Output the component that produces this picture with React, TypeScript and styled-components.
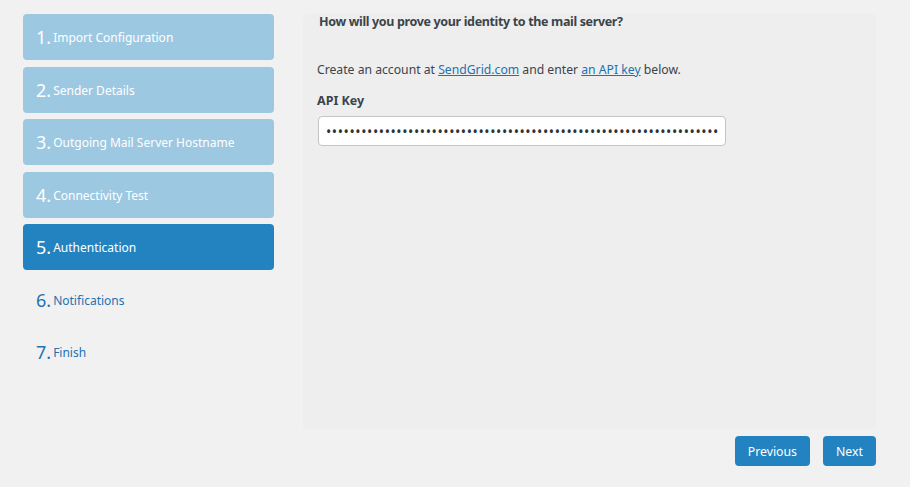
import React from "react";
import styled, { createGlobalStyle } from "styled-components";

const steps = [
  "Import Configuration",
  "Sender Details",
  "Outgoing Mail Server Hostname",
  "Connectivity Test",
  "Authentication",
  "Notifications",
  "Finish",
];

const current = 5;

const GlobalStyle = createGlobalStyle`
  html, body {
    margin: 0;
    padding: 0;
    background: #f1f1f1;
    font-family: "Noto Sans", "Open Sans", sans-serif;
    color: #3c434a;
  }
`;

function App() {
  return (
    <>
      <GlobalStyle />
      <Page>
        <Wizard>
          <StepList>
            {steps.map((label, i) => {
              const n = i + 1;
              const state = n < current ? "done" : n === current ? "active" : "todo";
              return (
                <Step key={label} $state={state}>
                  <StepNumber>{n}.</StepNumber>
                  <StepLabel>{label}</StepLabel>
                </Step>
              );
            })}
          </StepList>
          <Panel>
            <Question>How will you prove your identity to the mail server?</Question>
            <Intro>
              Create an account at <Link href="#">SendGrid.com</Link> and enter{" "}
              <Link href="#">an API key</Link> below.
            </Intro>
            <FieldLabel>API Key</FieldLabel>
            <KeyInput type="password" defaultValue={"x".repeat(90)} readOnly />
          </Panel>
        </Wizard>
        <Actions>
          <Button>Previous</Button>
          <Button>Next</Button>
        </Actions>
      </Page>
    </>
  );
}

const Page = styled.div`
  width: 853px;
  padding: 14px 0 0 23px;
  box-sizing: content-box;
`;

const Wizard = styled.div`
  display: flex;
  gap: 29px;
`;

const StepList = styled.ul`
  list-style: none;
  margin: 0;
  padding: 0;
  width: 251px;
  flex-shrink: 0;
  display: flex;
  flex-direction: column;
  gap: 6.5px;
`;

const Step = styled.li<{ $state: "done" | "active" | "todo" }>`
  height: 46px;
  display: flex;
  align-items: center;
  padding-left: 13px;
  border-radius: 4px;
  background: ${(p) =>
    p.$state === "done" ? "#9dc8e1" : p.$state === "active" ? "#2283c0" : "transparent"};
  color: ${(p) => (p.$state === "todo" ? "#2271b1" : "#ffffff")};
`;

const StepNumber = styled.span`
  font-size: 18px;
  margin-right: 2px;
  line-height: 1;
`;

const StepLabel = styled.span`
  font-size: 12px;
  line-height: 1;
  padding-top: 2px;
`;

const Panel = styled.div`
  width: 573px;
  height: 416px;
  box-sizing: border-box;
  background: #eeeeee;
  border-radius: 4px;
  padding: 0 14px;
`;

const Question = styled.h3`
  margin: 0 0 0 2px;
  font-size: 12.5px;
  font-weight: 700;
  line-height: 16px;
  letter-spacing: -0.35px;
  color: #3c434a;
`;

const Intro = styled.p`
  margin: 31px 0 0;
  font-size: 12.2px;
  line-height: 18px;
  color: #3c434a;
`;

const Link = styled.a`
  color: #2271b1;
  text-decoration: underline;
`;

const FieldLabel = styled.label`
  display: block;
  margin-top: 13px;
  font-size: 12.5px;
  font-weight: 700;
  line-height: 18px;
`;

const KeyInput = styled.input`
  display: block;
  margin: 6px 0 0 1px;
  width: 408px;
  height: 30px;
  box-sizing: border-box;
  border: 1px solid #c3c4c7;
  border-radius: 4px;
  background: #ffffff;
  padding: 0 7px;
  font-family: "Noto Sans", sans-serif;
  font-size: 14px;
  letter-spacing: 0.6px;
  color: #2c3338;
  outline: none;
`;

const Actions = styled.div`
  display: flex;
  justify-content: flex-end;
  gap: 13px;
  margin-top: 6px;
`;

const Button = styled.button`
  height: 30px;
  padding: 0 13px;
  border: none;
  border-radius: 4px;
  background: #2283c0;
  color: #ffffff;
  font-family: "Noto Sans", "Open Sans", sans-serif;
  font-size: 12.3px;
  cursor: pointer;
`;

export default App;
